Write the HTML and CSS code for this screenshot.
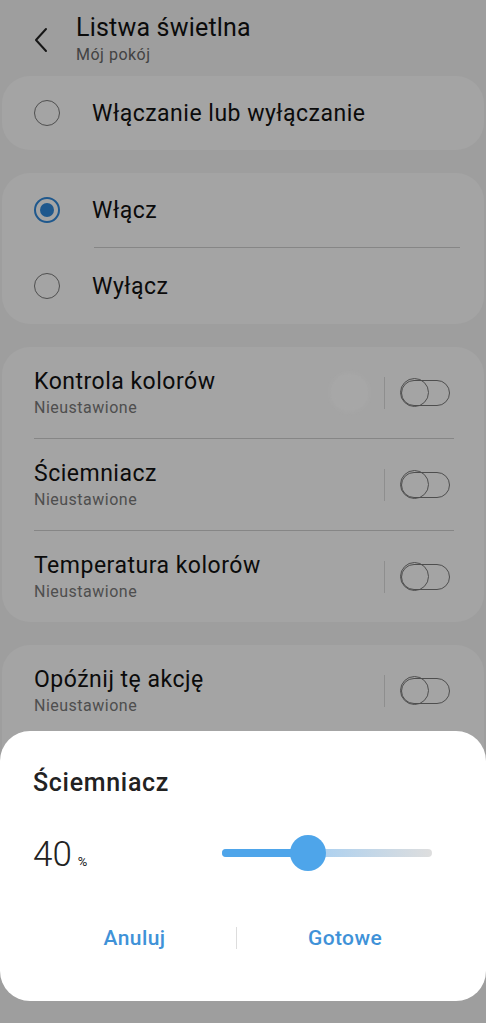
FILE: index.html
```html
<!DOCTYPE html>
<html lang="pl">
<head>
  <meta charset="UTF-8">
  <title>Listwa świetlna</title>
  <link rel="stylesheet" href="styles.css">
</head>
<body>

  <div class="page">
    <div class="header">
      <svg class="back" width="16" height="26" viewBox="0 0 16 26">
        <polyline points="13,2 3,13 13,24" fill="none" stroke="#222" stroke-width="2" stroke-linecap="round" stroke-linejoin="round"/>
      </svg>
      <div class="titles">
        <div class="title">Listwa świetlna</div>
        <div class="subtitle">Mój pokój</div>
      </div>
    </div>

    <div class="card">
      <div class="radio-row">
        <span class="radio"></span>
        <span class="radio-label">Włączanie lub wyłączanie</span>
      </div>
    </div>

    <div class="card">
      <div class="radio-row">
        <span class="radio checked"></span>
        <span class="radio-label">Włącz</span>
      </div>
      <div class="radio-divider"></div>
      <div class="radio-row">
        <span class="radio"></span>
        <span class="radio-label">Wyłącz</span>
      </div>
    </div>

    <div class="card">
      <div class="switch-row">
        <div class="row-text">
          <div class="row-title">Kontrola kolorów</div>
          <div class="row-sub">Nieustawione</div>
        </div>
        <span class="ripple"></span>
        <span class="vsep"></span>
        <span class="toggle"></span>
      </div>
      <div class="row-divider"></div>
      <div class="switch-row">
        <div class="row-text">
          <div class="row-title">Ściemniacz</div>
          <div class="row-sub">Nieustawione</div>
        </div>
        <span class="vsep"></span>
        <span class="toggle"></span>
      </div>
      <div class="row-divider"></div>
      <div class="switch-row">
        <div class="row-text">
          <div class="row-title">Temperatura kolorów</div>
          <div class="row-sub">Nieustawione</div>
        </div>
        <span class="vsep"></span>
        <span class="toggle"></span>
      </div>
    </div>

    <div class="card card-last">
      <div class="switch-row">
        <div class="row-text">
          <div class="row-title">Opóźnij tę akcję</div>
          <div class="row-sub">Nieustawione</div>
        </div>
        <span class="vsep"></span>
        <span class="toggle"></span>
      </div>
    </div>
  </div>

  <div class="scrim"></div>

  <div class="dialog">
    <div class="dialog-title">Ściemniacz</div>
    <div class="level">
      <div class="value">40<span class="unit">%</span></div>
      <div class="slider">
        <div class="track"></div>
        <div class="fill" style="width: 41%"></div>
        <div class="thumb" style="left: 41%"></div>
      </div>
    </div>
    <div class="buttons">
      <button class="btn btn-cancel">Anuluj</button>
      <span class="btn-sep"></span>
      <button class="btn">Gotowe</button>
    </div>
  </div>

</body>
</html>
```

FILE: styles.css
```css
html, body {
  margin: 0;
  height: 100%;
}
body {
  font-family: Roboto, "Noto Sans", sans-serif;
  background: #f0f0f0;
  color: #111;
  overflow: hidden;
  position: relative;
}
.page {
  padding-top: 13px;
}
.header {
  display: flex;
  align-items: flex-start;
  height: 63px;
}
.back {
  margin: 14px 0 0 33px;
}
.titles {
  margin-left: 27px;
}
.title {
  font-size: 25px;
  line-height: 30px;
  letter-spacing: 0.2px;
}
.subtitle {
  font-size: 16px;
  line-height: 20px;
  letter-spacing: 0.5px;
  color: #666;
  margin-top: 2px;
}
.card {
  background: #f9f9f9;
  border-radius: 28px;
  margin: 0 2px 23px;
  overflow: hidden;
}
.radio-row {
  display: flex;
  align-items: center;
  height: 74px;
  padding-left: 32px;
}
.card .radio-row + .radio-divider + .radio-row {
  height: 76px;
}
.radio {
  width: 26px;
  height: 26px;
  border: 1px solid #777;
  border-radius: 50%;
  box-sizing: border-box;
  position: relative;
}
.radio.checked {
  border: 2px solid #2f86d6;
}
.radio.checked::after {
  content: "";
  position: absolute;
  left: 4px;
  top: 4px;
  width: 14px;
  height: 14px;
  border-radius: 50%;
  background: #2f86d6;
}
.radio-label {
  font-size: 23px;
  line-height: 28px;
  margin: 2px 0 0 32px;
  letter-spacing: 0.5px;
}
.radio-divider {
  height: 1px;
  background: #ccc;
  margin: 0 24px 0 92px;
}
.switch-row {
  display: flex;
  align-items: center;
  height: 91px;
  padding: 0 34px 0 32px;
  position: relative;
}
.row-text {
  flex: 1;
}
.row-title {
  font-size: 23px;
  line-height: 28px;
  letter-spacing: 0.5px;
}
.row-sub {
  font-size: 16px;
  line-height: 20px;
  letter-spacing: 0.5px;
  color: #777;
  margin-top: 2px;
}
.row-divider {
  height: 1px;
  background: #ccc;
  margin: 0 30px 0 32px;
}
.ripple {
  position: absolute;
  left: 328px;
  top: 26px;
  width: 39px;
  height: 39px;
  border-radius: 50%;
  background: #fefefe;
  filter: blur(2px);
}
.vsep {
  width: 1px;
  height: 32px;
  background: #d8d8d8;
  margin-right: 16px;
}
.toggle {
  width: 49px;
  height: 26px;
  border: 1.5px solid #777;
  border-radius: 14px;
  box-sizing: border-box;
  position: relative;
}
.toggle::before {
  content: "";
  position: absolute;
  left: -2px;
  top: -3px;
  width: 29px;
  height: 29px;
  border: 1.5px solid #777;
  border-radius: 50%;
  box-sizing: border-box;
}
.card-last {
  height: 200px;
}
.scrim {
  position: absolute;
  inset: 0;
  background: rgba(0, 0, 0, 0.34);
}
.dialog {
  position: absolute;
  left: 0;
  right: 0;
  top: 731px;
  height: 270px;
  background: #fff;
  border-radius: 30px;
  padding: 0 33px;
  box-sizing: border-box;
}
.dialog-title {
  font-size: 25px;
  line-height: 30px;
  font-weight: 500;
  letter-spacing: 0.7px;
  color: #222;
  margin-top: 37px;
}
.level {
  display: flex;
  align-items: center;
  margin-top: 36px;
  height: 40px;
}
.value {
  font-size: 35px;
  font-weight: 300;
  color: #222;
  width: 189px;
}
.unit {
  font-size: 13px;
  font-weight: 400;
  margin-left: 6px;
}
.slider {
  position: relative;
  width: 210px;
  height: 36px;
  margin-top: -2px;
}
.track {
  position: absolute;
  left: 0;
  right: 0;
  top: 14px;
  height: 8px;
  border-radius: 4px;
  background: linear-gradient(to right, #a6cff2 40%, #dedede);
}
.fill {
  position: absolute;
  left: 0;
  top: 14px;
  height: 8px;
  border-radius: 4px;
  background: #4ea5ea;
}
.thumb {
  position: absolute;
  top: 0;
  width: 36px;
  height: 36px;
  margin-left: -18px;
  border-radius: 50%;
  background: #4ea5ea;
}
.buttons {
  display: flex;
  align-items: center;
  margin-top: 44px;
}
.btn {
  flex: 1;
  background: none;
  border: 0;
  font-family: Roboto, "Noto Sans", sans-serif;
  font-size: 21px;
  font-weight: 500;
  letter-spacing: 0.4px;
  color: #3f92d8;
  padding: 8px 0;
}
.btn-cancel {
  flex: 0 0 203px;
}
.btn-sep {
  width: 1px;
  height: 22px;
  background: #ddd;
}
```
